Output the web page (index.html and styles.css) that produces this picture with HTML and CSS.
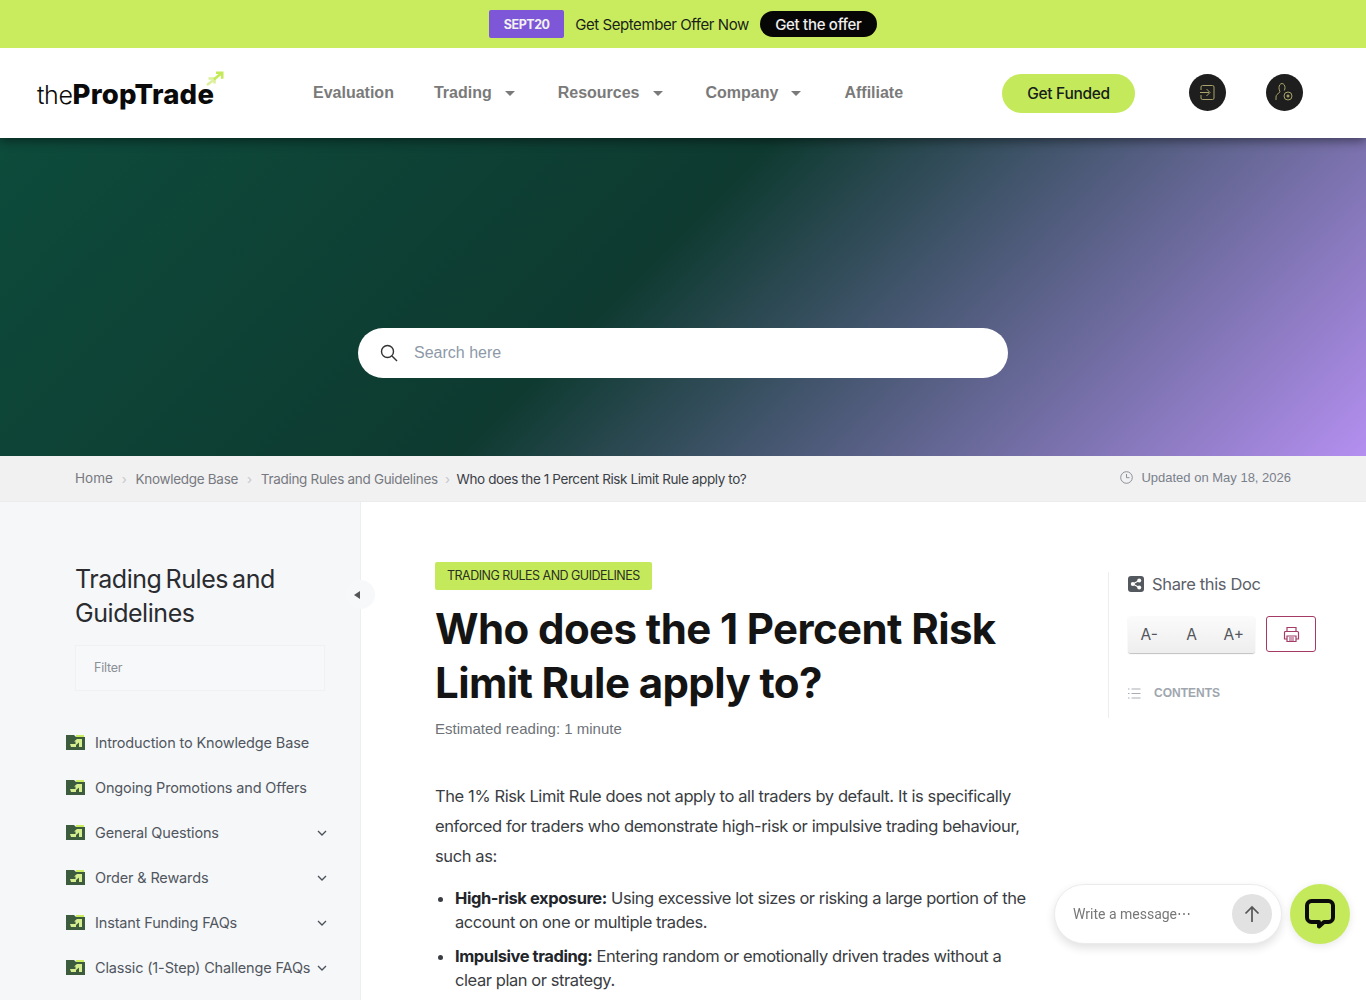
FILE: index.html
```html
<!DOCTYPE html>
<html lang="en">
<head>
<meta charset="utf-8">
<title>Who does the 1 Percent Risk Limit Rule apply to?</title>
<link rel="stylesheet" href="styles.css">
</head>
<body>
<div class="promo">
  <span class="promo-code">SEPT20</span>
  <span class="promo-text">Get September Offer Now</span>
  <a class="promo-btn">Get the offer</a>
</div>
<header class="header">
  <a class="logo"><span class="logo-the">the</span><span class="logo-name">PropTrade</span>
    <svg class="logo-arrows" width="18" height="16" viewBox="0 0 18 16" fill="none"><path d="M1 14 7 9.500M2.500 7.500h6v5" stroke="#dcef9c" stroke-width="2.600"/><path d="M8 8.500l7-6M10 1.800h6.200v6" stroke="#c4ea5c" stroke-width="2.600"/></svg>
  </a>
  <nav class="nav">
    <a class="nav-item">Evaluation</a>
    <a class="nav-item">Trading<i class="caret"></i></a>
    <a class="nav-item">Resources<i class="caret"></i></a>
    <a class="nav-item">Company<i class="caret"></i></a>
    <a class="nav-item">Affiliate</a>
  </nav>
  <a class="cta">Get Funded</a>
  <a class="round-btn round-first"><svg width="17" height="17" viewBox="0 0 17 17" fill="none" stroke="#a9a26a" stroke-width="1"><path d="M2 6V3a1.500 1.500 0 0 1 1.500-1.500h10A1.500 1.500 0 0 1 15 3v11a1.500 1.500 0 0 1-1.500 1.500h-10A1.500 1.500 0 0 1 2 14v-3"/><path d="M1 8.500h9M7.500 5 11 8.500 7.500 12"/></svg></a>
  <a class="round-btn round-second"><svg width="21" height="21" viewBox="0 0 21 21" fill="none" stroke="#a9a26a" stroke-width="1"><path d="M2 18v-3c0-2 1.500-3 3.500-4.500.5-.4.5-1 .2-1.500C5 7.500 5 6.500 5 5.500 5 3.500 6.300 1.500 8 1.500s3 2 3 4c0 1-.2 2-.7 3"/><circle cx="14" cy="14" r="4"/><circle cx="14" cy="14" r="1.100" fill="#a9a26a"/></svg></a>
</header>
<section class="hero">
  <div class="search">
    <svg width="18" height="18" viewBox="0 0 18 18" fill="none" stroke="#333" stroke-width="1.400"><circle cx="7.500" cy="7.500" r="6"/><path d="m12 12 5 5"/></svg>
    <span class="search-text">Search here</span>
  </div>
</section>
<div class="crumbs">
  <div class="crumb-list">
    <a class="crumb crumb-home">Home</a><span class="sep">›</span>
    <a class="crumb">Knowledge Base</a><span class="sep">›</span>
    <a class="crumb">Trading Rules and Guidelines</a><span class="sep sep-last">›</span>
    <span class="crumb crumb-current">Who does the 1 Percent Risk Limit Rule apply to?</span>
  </div>
  <div class="updated">
    <svg width="13" height="13" viewBox="0 0 13 13" fill="none" stroke="#8a9099" stroke-width="1"><circle cx="6.500" cy="6.500" r="5.800"/><path d="M6.500 3v3.700h3"/></svg>
    <span>Updated on May 18, 2026</span>
  </div>
</div>
<div class="layout">
  <aside class="sidebar">
    <h2 class="side-title">Trading Rules and Guidelines</h2>
    <div class="filter">Filter</div>
    <ul class="side-list">
      <li class="side-item"><svg class="folder" width="19" height="15" viewBox="0 0 19 15"><path d="M0 0h8l2 2h9v13H0z" fill="#3d5c3e"/><path d="M10 0h8v2h-8z" fill="#c9ec5e"/><path d="M4 9h5.500V6.500H8L11 4h5v8h-3V7.500l-3 2.500v2H5z" fill="#d5ed8e"/></svg><span>Introduction to Knowledge Base</span></li>
      <li class="side-item"><svg class="folder" width="19" height="15" viewBox="0 0 19 15"><path d="M0 0h8l2 2h9v13H0z" fill="#3d5c3e"/><path d="M10 0h8v2h-8z" fill="#c9ec5e"/><path d="M4 9h5.500V6.500H8L11 4h5v8h-3V7.500l-3 2.500v2H5z" fill="#d5ed8e"/></svg><span>Ongoing Promotions and Offers</span></li>
      <li class="side-item"><svg class="folder" width="19" height="15" viewBox="0 0 19 15"><path d="M0 0h8l2 2h9v13H0z" fill="#3d5c3e"/><path d="M10 0h8v2h-8z" fill="#c9ec5e"/><path d="M4 9h5.500V6.500H8L11 4h5v8h-3V7.500l-3 2.500v2H5z" fill="#d5ed8e"/></svg><span>General Questions</span><svg class="chev" width="10" height="6" viewBox="0 0 10 6" fill="none" stroke="#4a5058" stroke-width="1.300"><path d="m1 1 4 4 4-4"/></svg></li>
      <li class="side-item"><svg class="folder" width="19" height="15" viewBox="0 0 19 15"><path d="M0 0h8l2 2h9v13H0z" fill="#3d5c3e"/><path d="M10 0h8v2h-8z" fill="#c9ec5e"/><path d="M4 9h5.500V6.500H8L11 4h5v8h-3V7.500l-3 2.500v2H5z" fill="#d5ed8e"/></svg><span>Order &amp; Rewards</span><svg class="chev" width="10" height="6" viewBox="0 0 10 6" fill="none" stroke="#4a5058" stroke-width="1.300"><path d="m1 1 4 4 4-4"/></svg></li>
      <li class="side-item"><svg class="folder" width="19" height="15" viewBox="0 0 19 15"><path d="M0 0h8l2 2h9v13H0z" fill="#3d5c3e"/><path d="M10 0h8v2h-8z" fill="#c9ec5e"/><path d="M4 9h5.500V6.500H8L11 4h5v8h-3V7.500l-3 2.500v2H5z" fill="#d5ed8e"/></svg><span>Instant Funding FAQs</span><svg class="chev" width="10" height="6" viewBox="0 0 10 6" fill="none" stroke="#4a5058" stroke-width="1.300"><path d="m1 1 4 4 4-4"/></svg></li>
      <li class="side-item"><svg class="folder" width="19" height="15" viewBox="0 0 19 15"><path d="M0 0h8l2 2h9v13H0z" fill="#3d5c3e"/><path d="M10 0h8v2h-8z" fill="#c9ec5e"/><path d="M4 9h5.500V6.500H8L11 4h5v8h-3V7.500l-3 2.500v2H5z" fill="#d5ed8e"/></svg><span>Classic (1-Step) Challenge FAQs</span><svg class="chev" width="10" height="6" viewBox="0 0 10 6" fill="none" stroke="#4a5058" stroke-width="1.300"><path d="m1 1 4 4 4-4"/></svg></li>
    </ul>
    <button class="collapse"><i class="collapse-arrow"></i></button>
  </aside>
  <main class="article">
    <span class="tag">TRADING RULES AND GUIDELINES</span>
    <h1 class="title">Who does the 1 Percent Risk Limit Rule apply to?</h1>
    <p class="reading">Estimated reading: 1 minute</p>
    <p class="lead">The 1% Risk Limit Rule does not apply to all traders by default. It is specifically enforced for traders who demonstrate high-risk or impulsive trading behaviour, such as:</p>
    <ul class="points">
      <li><strong>High-risk exposure:</strong> Using excessive lot sizes or risking a large portion of the account on one or multiple trades.</li>
      <li><strong>Impulsive trading:</strong> Entering random or emotionally driven trades without a clear plan or strategy.</li>
    </ul>
  </main>
  <aside class="tools">
    <div class="share"><svg width="16" height="16" viewBox="0 0 16 16"><rect width="16" height="16" rx="3" fill="#54585f"/><circle cx="4.800" cy="8" r="2" fill="#fff"/><circle cx="11.200" cy="4.500" r="2" fill="#fff"/><circle cx="11.200" cy="11.500" r="2" fill="#fff"/><path d="m4.800 8 6.400-3.500M4.800 8l6.400 3.500" stroke="#fff" stroke-width="1.200"/></svg><span>Share this Doc</span></div>
    <div class="tool-row">
      <div class="font-btns"><span class="font-btn">A-</span><span class="font-btn">A</span><span class="font-btn">A+</span></div>
      <a class="print"><svg width="17" height="17" viewBox="0 0 17 17" fill="none" stroke="#a33b66" stroke-width="1.200"><path d="M4 6V1.500h9V6M4 13H1.500V6.500a1 1 0 0 1 1-1h12a1 1 0 0 1 1 1V13H13"/><path d="M4 10h9v5.500H4zM6 12h5M6 14h5"/></svg></a>
    </div>
    <div class="contents"><svg width="13" height="11" viewBox="0 0 13 11" fill="none" stroke="#a7adb5" stroke-width="1"><path d="M3.500 1h9M3.500 5.500h9M3.500 10h9M0 1h1.500M0 5.500h1.500M0 10h1.500"/></svg><span>CONTENTS</span></div>
  </aside>
</div>
<div class="chat">
  <div class="chat-box"><span class="chat-text">Write a message⋯</span><span class="chat-send"><svg width="16" height="18" viewBox="0 0 16 18" fill="none" stroke="#555" stroke-width="1.700"><path d="M8 17V2M1.500 8.500 8 2l6.500 6.500"/></svg></span></div>
  <a class="chat-launch"><svg width="32" height="32" viewBox="0 0 32 32" fill="none"><path d="M7.500 3h17a4.500 4.500 0 0 1 4.500 4.500v12a4.500 4.500 0 0 1-4.500 4.500h-4.500l-5 4.500V24h-7.500A4.500 4.500 0 0 1 3 19.500v-12A4.500 4.500 0 0 1 7.500 3z" stroke="#0b0b0b" stroke-width="4" stroke-linejoin="round"/></svg></a>
</div>
</body>
</html>
```

FILE: styles.css
```css
* { box-sizing: border-box; }
html, body { margin: 0; padding: 0; }
body { font-family: "Inter", "Liberation Sans", sans-serif; color: #222; background: #fff; height: 1000px; overflow: hidden; }
a { text-decoration: none; color: inherit; }
ul { list-style: none; margin: 0; padding: 0; }
h1, h2, p { margin: 0; }

.promo { position: relative; z-index: 3; height: 48px; background: #c9ec5e; display: flex; justify-content: center; align-items: center; }
.promo-code { width: 75px; height: 28px; background: #7e57d9; color: #f2f2f2; font-size: 12.500px; font-weight: 700; letter-spacing: -0.450px; border-radius: 2px; display: flex; align-items: center; justify-content: center; }
.promo-text { margin-left: 11px; font-size: 15px; letter-spacing: -0.430px; color: #1a1f1a; }
.promo-btn { margin-left: 11px; width: 117px; height: 26px; border-radius: 13px; background: #060606; color: #eee; font-size: 15px; font-weight: 500; letter-spacing: -0.300px; display: flex; align-items: center; justify-content: center; }

.header { position: relative; z-index: 2; height: 90px; background: #fff; display: flex; align-items: center; padding: 0 0 2px 37px; box-shadow: 0 3px 10px rgba(0,0,0,.45); }
.logo { position: relative; width: 276px; display: flex; align-items: baseline; color: #0a0a0a; margin-top: 3px; }
.logo-the { font-size: 25px; font-weight: 300; letter-spacing: -0.400px; }
.logo-name { font-size: 27.500px; font-weight: 800; letter-spacing: 0.250px; }
.logo-arrows { position: absolute; left: 169px; top: -6px; }
.nav { display: flex; gap: 40px; width: 689px; font-family: "Liberation Sans", sans-serif; font-size: 16px; font-weight: 700; color: #7a7a7a; }
.nav-item { display: flex; align-items: center; margin-top: 1px; }
.caret { width: 0; height: 0; margin: 2px 3px 0 13px; border-left: 5px solid transparent; border-right: 5px solid transparent; border-top: 5px solid #7a7a7a; }
.cta { width: 133px; height: 39px; border-radius: 20px; background: #c4ea5c; color: #16201a; font-size: 15.500px; font-weight: 500; letter-spacing: -0.300px; display: flex; align-items: center; justify-content: center; margin-top: 2px; }
.round-btn { width: 37px; height: 37px; border-radius: 50%; background: #1e1e1e; display: flex; align-items: center; justify-content: center; }
.round-first { margin-left: 54px; }
.round-second { margin-left: 40px; }

.hero { height: 318px; background: linear-gradient(135deg, #0d4b3b 0%, #0e3a30 46%, #b48ff0 100%); display: flex; justify-content: center; padding-top: 190px; }
.search { width: 650px; height: 50px; border-radius: 25px; background: #fff; display: flex; align-items: center; padding-left: 22px; gap: 16px; }
.search-text { font-family: "Liberation Sans", sans-serif; font-size: 16px; color: #8d99a8; }

.crumbs { height: 46px; background: #f1f1f2; display: flex; justify-content: space-between; align-items: center; padding: 0 75px; border-bottom: 1px solid #ececec; }
.crumb-list { display: flex; align-items: center; font-size: 13.500px; letter-spacing: -0.300px; color: #77797f; }
.crumb-home { letter-spacing: 0; margin-top: -1px; }
.crumb-current { color: #3c3f45; letter-spacing: -0.400px; }
.sep { color: #c5c7ca; font-size: 13px; margin: 0 9px; }
.sep-last { margin: 0 7px; }
.updated { display: flex; align-items: center; gap: 8px; margin-top: -2px; font-family: "Liberation Sans", sans-serif; font-size: 13px; color: #7a808a; }

.layout { display: flex; height: 500px; }
.sidebar { position: relative; width: 361px; background: #f5f7f9; border-right: 1px solid #eceef0; padding: 60px 35px 0 66px; flex: none; }
.side-title { margin-left: 9px; font-size: 25px; font-weight: 400; line-height: 34px; letter-spacing: -0.450px; word-spacing: -2.500px; color: #2a2c30; }
.filter { margin: 15px 0 0 9px; height: 46px; width: 250px; background: #f7f8fa; border: 1px solid #f0f1f3; padding-left: 18px; line-height: 44px; font-size: 12.500px; color: #8b8f96; letter-spacing: -0.200px; }
.side-list { margin-top: 29px; }
.side-item { height: 45px; display: flex; align-items: center; font-size: 14.500px; letter-spacing: -0.150px; color: #51565e; width: 261px; position: relative; }
.folder { margin: -1px 10px 0 0; flex: none; }
.chev { margin-left: auto; flex: none; }
.side-item span { white-space: nowrap; }
.collapse { position: absolute; right: -15px; top: 78px; width: 29px; height: 29px; border-radius: 50%; border: 0; background: #f7f8f9; display: flex; align-items: center; padding: 0 0 0 8px; }
.collapse-arrow { width: 0; height: 0; border-top: 4px solid transparent; border-bottom: 4px solid transparent; border-right: 6px solid #555; }

.article { width: 673px; padding: 60px 0 0 74px; flex: none; }
.tag { display: inline-block; height: 28px; line-height: 28px; padding: 0 12px; background: #c4ea5c; border-radius: 2px; font-size: 12.500px; color: #2b2f24; letter-spacing: -0.520px; }
.title { margin-top: 12px; font-size: 42px; line-height: 54px; font-weight: 700; letter-spacing: -0.600px; color: #141414; }
.reading { margin-top: 10px; font-family: "Liberation Sans", sans-serif; font-size: 15px; color: #6d7278; }
.lead { margin-top: 44px; font-size: 16.500px; line-height: 30px; letter-spacing: -0.400px; color: #3a3d42; width: 598px; }
.points { margin-top: 15px; list-style: disc; padding-left: 20px; font-size: 16.500px; line-height: 24px; letter-spacing: -0.430px; color: #3a3d42; width: 598px; }
.points li { margin-bottom: 10px; }
.points strong { font-weight: 700; color: #22252a; }

.tools { margin: 70px 0 0 74px; width: 220px; height: 146px; border-left: 1px solid #eceef0; padding-left: 19px; }
.share { display: flex; align-items: center; gap: 8px; font-size: 16.500px; letter-spacing: -0.350px; color: #5c6068; height: 24px; }
.tool-row { display: flex; margin-top: 20px; gap: 11px; }
.font-btns { display: flex; height: 37px; width: 127px; border-radius: 3px; background: linear-gradient(#fbfbfb, #eeeeee); box-shadow: 0 1px 1px rgba(0,0,0,.25); }
.font-btn { flex: 1; display: flex; align-items: center; justify-content: center; font-size: 15.500px; color: #53565c; }
.print { width: 50px; height: 36px; border: 1px solid #a33b66; border-radius: 3px; display: flex; align-items: center; justify-content: center; }
.contents { display: flex; align-items: center; gap: 13px; margin-top: 33px; font-family: "Liberation Sans", sans-serif; font-weight: 700; font-size: 12px; color: #a0a6ae; }

.chat { position: fixed; left: 1054px; top: 884px; display: flex; gap: 8px; }
.chat-box { width: 228px; height: 60px; border-radius: 30px; background: #fff; border: 1px solid #ebebeb; box-shadow: 0 4px 10px rgba(0,0,0,.12); display: flex; align-items: center; justify-content: space-between; padding: 0 9px 0 18px; }
.chat-text { font-family: "Roboto", "Noto Sans", sans-serif; font-size: 14px; color: #777; }
.chat-send { width: 40px; height: 40px; border-radius: 50%; background: #e2e2e2; display: flex; align-items: center; justify-content: center; }
.chat-launch { width: 60px; height: 60px; border-radius: 50%; background: #c4ea5c; display: flex; align-items: center; justify-content: center; box-shadow: 0 2px 8px rgba(0,0,0,.1); }
```
